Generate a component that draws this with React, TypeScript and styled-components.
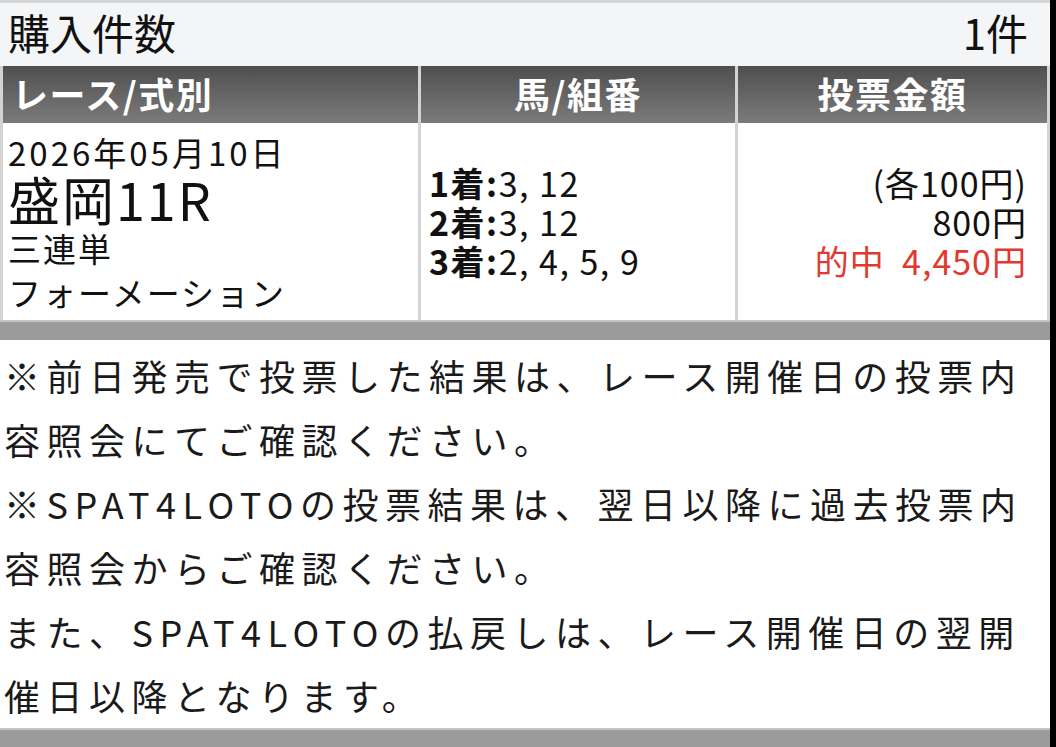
import React from "react";
import styled, { createGlobalStyle } from "styled-components";

const Global = createGlobalStyle`
  html, body { margin: 0; padding: 0; background: #000; }
  body { font-family: "Noto Sans CJK JP", "Noto Sans", sans-serif; color: #1a1a1a; }
  * { box-sizing: border-box; }
`;

const Screen = styled.div`
  display: flex;
  width: 1056px;
  height: 747px;
  overflow: hidden;
  background: #000;
`;

const Page = styled.div`
  width: 1050px;
  display: flex;
  flex-direction: column;
  background: #fff;
`;

const CountBar = styled.div`
  height: 66px;
  border-top: 3px solid #d4d6d8;
  background: #f3f5f6;
  display: flex;
  align-items: center;
  justify-content: space-between;
  padding: 0 22px 5px 8px;
  font-size: 42px;
  line-height: 1;
  color: #111;
`;

const Grid = styled.div`
  display: grid;
  grid-template-columns: 415px 314px 309px;
  column-gap: 3px;
  padding: 0 3px;
  background: #d3d3d3;
`;

const HeadCell = styled.div<{ $align: "left" | "center" }>`
  height: 57px;
  display: flex;
  align-items: center;
  justify-content: ${(p) => (p.$align === "center" ? "center" : "flex-start")};
  padding: 0 9px 3px;
  background: linear-gradient(#4f4f4f, #7b7b7b);
  color: #fff;
  font-weight: 700;
  font-size: 36px;
  letter-spacing: 1.5px;
  line-height: 1;
`;

const BodyCell = styled.div<{ $align?: "left" | "right" }>`
  height: 197px;
  background: #fff;
  display: flex;
  flex-direction: column;
  justify-content: center;
  align-items: ${(p) => (p.$align === "right" ? "flex-end" : "flex-start")};
  text-align: ${(p) => p.$align ?? "left"};
  padding: 0 20px 0 8px;
`;

const RaceCell = styled(BodyCell)`
  justify-content: flex-start;
  padding: 9px 0 0 5px;
`;

const Line = styled.div<{ $size: number; $h: number; $ls?: number; $color?: string }>`
  font-size: ${(p) => p.$size}px;
  line-height: ${(p) => p.$h}px;
  letter-spacing: ${(p) => p.$ls ?? 0}px;
  color: ${(p) => p.$color ?? "#111"};
  white-space: pre;
`;

const Bold = styled.span`
  font-weight: 700;
`;

const Band = styled.div<{ $h: number }>`
  height: ${(p) => p.$h}px;
  background: #9b9b9b;
  border-top: 2px solid #c4c4c4;
  flex-shrink: 0;
`;

const Notes = styled.div`
  flex: 1;
  padding: 3px 0 0 4px;
  font-size: 36px;
  line-height: 64px;
  letter-spacing: 6.5px;
  white-space: nowrap;
  color: #1a1a1a;
`;

export default function App() {
  return (
    <>
      <Global />
      <Screen>
        <Page>
          <CountBar>
            <span>購入件数</span>
            <span>1件</span>
          </CountBar>
          <Grid>
            <HeadCell $align="left">レース/式別</HeadCell>
            <HeadCell $align="center">馬/組番</HeadCell>
            <HeadCell $align="center">投票金額</HeadCell>
            <RaceCell>
              <Line $size={33} $h={40} $ls={3}>2026年05月10日</Line>
              <Line $size={52} $h={54} $ls={2}>盛岡11R</Line>
              <Line $size={33} $h={44} $ls={2}>三連単</Line>
              <Line $size={33} $h={44} $ls={2}>フォーメーション</Line>
            </RaceCell>
            <BodyCell>
              <Line $size={34} $h={39} $ls={1.5}><Bold>1着:</Bold>3, 12</Line>
              <Line $size={34} $h={39} $ls={1.5}><Bold>2着:</Bold>3, 12</Line>
              <Line $size={34} $h={39} $ls={1.5}><Bold>3着:</Bold>2, 4, 5, 9</Line>
            </BodyCell>
            <BodyCell $align="right">
              <Line $size={34} $h={39} $ls={1}>(各100円)</Line>
              <Line $size={34} $h={39} $ls={1}>800円</Line>
              <Line $size={34} $h={39} $ls={1} $color="#e2392e">{"的中  4,450円"}</Line>
            </BodyCell>
          </Grid>
          <Band $h={20} />
          <Notes>
            ※前日発売で投票した結果は、レース開催日の投票内
            <br />
            容照会にてご確認ください。
            <br />
            ※SPAT4LOTOの投票結果は、翌日以降に過去投票内
            <br />
            容照会からご確認ください。
            <br />
            また、SPAT4LOTOの払戻しは、レース開催日の翌開
            <br />
            催日以降となります。
          </Notes>
          <Band $h={19} />
        </Page>
      </Screen>
    </>
  );
}
